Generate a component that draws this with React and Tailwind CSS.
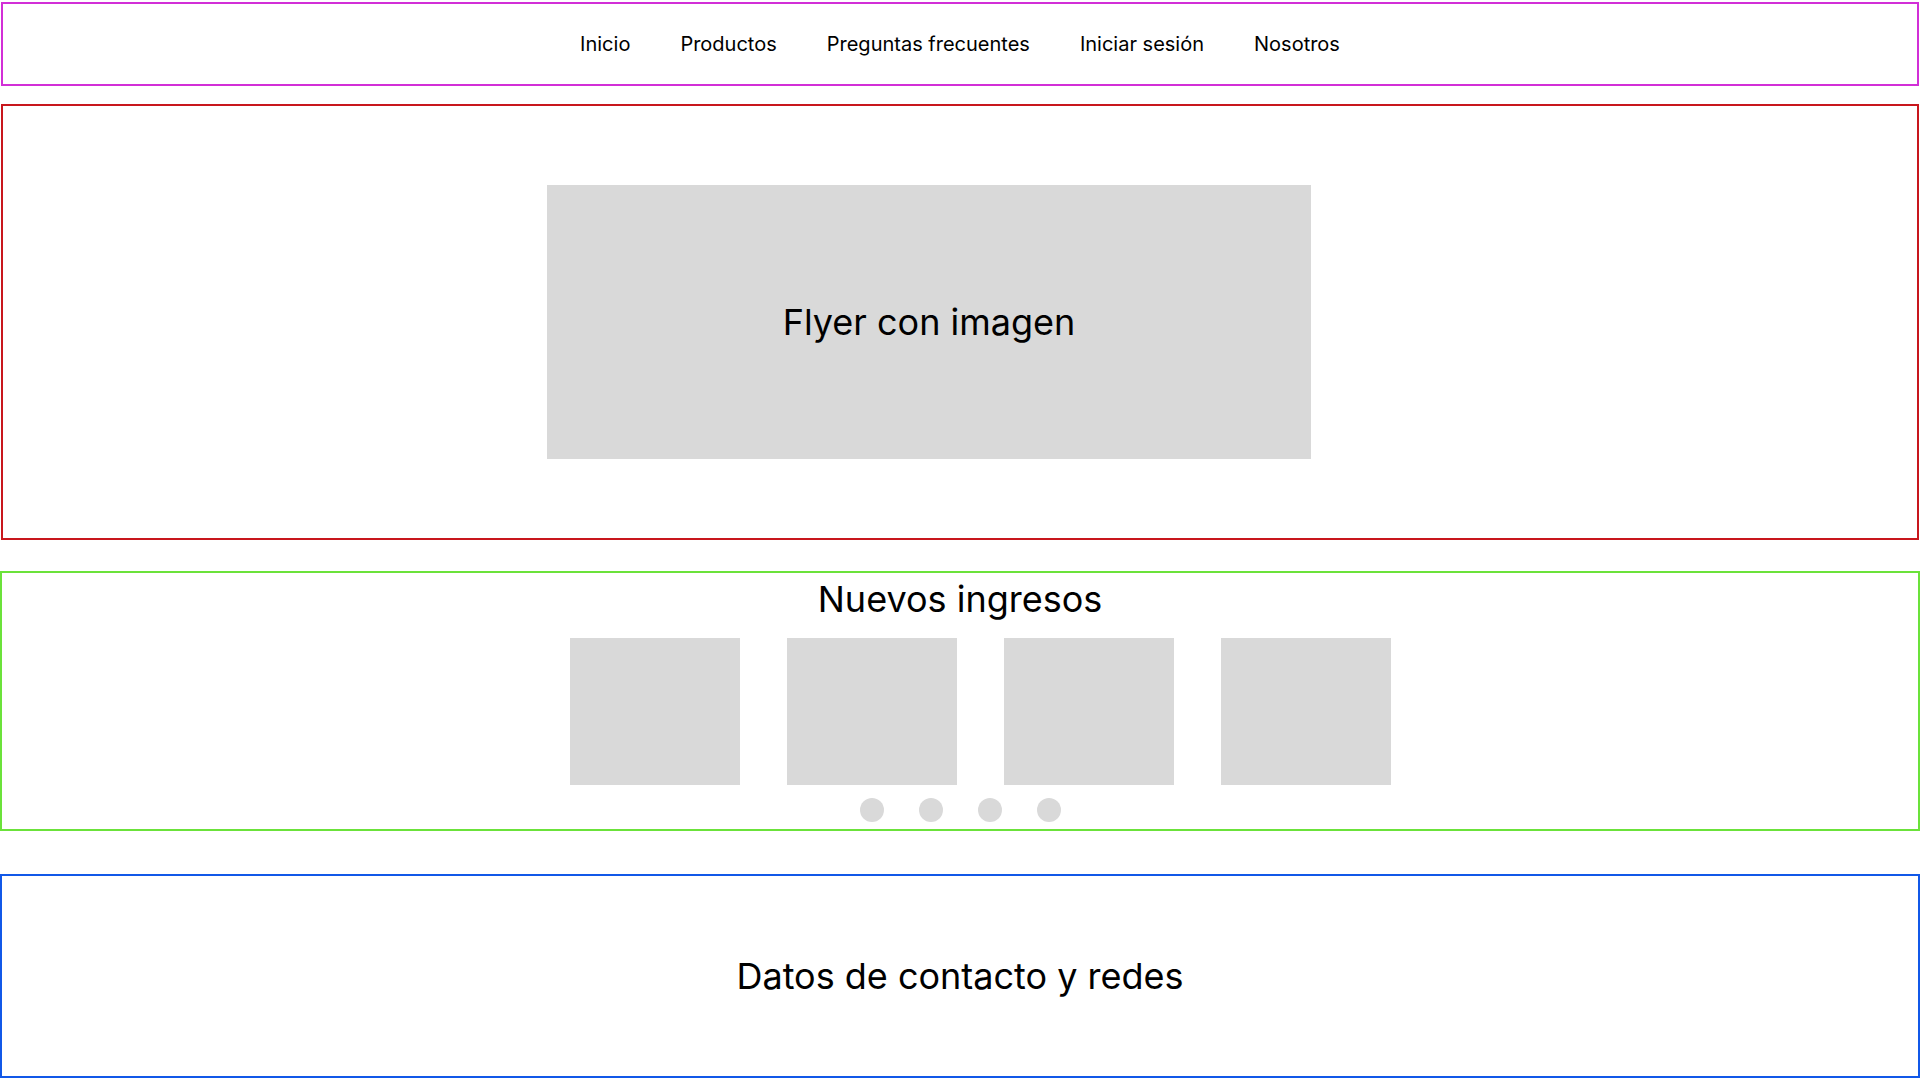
const NAV_LINKS = ['Inicio', 'Productos', 'Preguntas frecuentes', 'Iniciar sesión', 'Nosotros']

export default function App() {
  return (
    <div className="w-[1920px] h-[1080px] bg-white text-black overflow-hidden font-['Inter','Noto_Sans',sans-serif]">
      {/* Navbar */}
      <nav className="mx-px mt-[2px] h-[84px] border-2 border-[#d22fd7] flex items-center justify-center gap-[50px]">
        {NAV_LINKS.map((link) => (
          <a key={link} href="#" className="text-[20px] leading-none">
            {link}
          </a>
        ))}
      </nav>

      {/* Hero */}
      <section className="mx-px mt-[18px] h-[436px] border-2 border-[#c8171d] pt-[79px] flex justify-center">
        <div className="mr-[62px] w-[764px] h-[274px] bg-[#d9d9d9] flex items-center justify-center">
          <span className="text-[36px] leading-none">Flyer con imagen</span>
        </div>
      </section>

      {/* Nuevos ingresos */}
      <section className="mt-[31px] h-[260px] border-2 border-[#6be23a] pt-[8px] flex flex-col items-center">
        <h2 className="text-[36px] leading-none">Nuevos ingresos</h2>
        <div className="mt-[21px] ml-[41px] flex gap-[47px]">
          {[0, 1, 2, 3].map((i) => (
            <div key={i} className="w-[170px] h-[147px] bg-[#d9d9d9]" />
          ))}
        </div>
        <div className="mt-[13px] flex gap-[35px]">
          {[0, 1, 2, 3].map((i) => (
            <span key={i} className="w-[24px] h-[24px] rounded-full bg-[#d9d9d9]" />
          ))}
        </div>
      </section>

      {/* Footer */}
      <footer className="mt-[43px] h-[204px] border-2 border-[#1158e8] flex items-center justify-center">
        <span className="text-[36px] leading-none">Datos de contacto y redes</span>
      </footer>
    </div>
  )
}
